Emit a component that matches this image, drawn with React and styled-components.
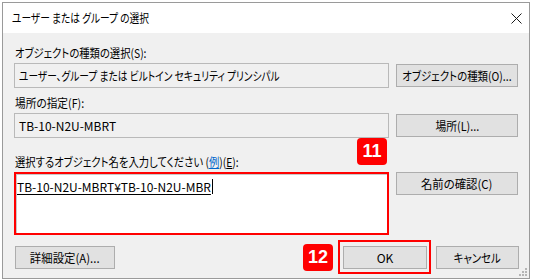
import React from 'react'
import styled, { createGlobalStyle, css } from 'styled-components'

const GlobalStyle = createGlobalStyle`
  html, body {
    margin: 0;
    padding: 0;
    background: #fff;
  }
  body {
    font-family: "Noto Sans CJK JP", "Noto Sans", sans-serif;
    font-feature-settings: "palt";
    font-size: 12px;
    color: #000;
  }
`

// Yu Gothic UI is much narrower than Noto Sans CJK, so text is condensed per use
const Text = styled.span`
  display: inline-block;
  white-space: nowrap;
  transform: scaleX(${p => p.$sx || 1});
  transform-origin: ${p => (p.$center ? 'center' : 'left')} center;
`

const CloseIcon = () => (
  <svg width="11" height="11" viewBox="0 0 11 11">
    <path d="M0.5 0.5 L10.5 10.5 M10.5 0.5 L0.5 10.5" stroke="#1a1a1a" strokeWidth="1" fill="none" />
  </svg>
)

const GripIcon = () => (
  <svg width="9" height="9" viewBox="0 0 9 9">
    <g fill="#b5b5b5">
      <rect x="6" y="0" width="2" height="2" />
      <rect x="3" y="3" width="2" height="2" />
      <rect x="6" y="3" width="2" height="2" />
      <rect x="0" y="6" width="2" height="2" />
      <rect x="3" y="6" width="2" height="2" />
      <rect x="6" y="6" width="2" height="2" />
    </g>
  </svg>
)

export default function App() {
  return (
    <>
      <GlobalStyle />
      <Window>
        <TitleBar>
          <Title><Text $sx={0.81}>ユーザー または グループ の選択</Text></Title>
          <CloseButton><CloseIcon /></CloseButton>
        </TitleBar>
        <Body>
          <Label><Text $sx={0.86}>オブジェクトの種類の選択(S):</Text></Label>
          <Row>
            <ReadOnlyField>
              <Text $sx={0.81}>ユーザー、グループ または ビルトイン セキュリティ プリンシパル</Text>
            </ReadOnlyField>
            <Button><Text $sx={0.87} $center>オブジェクトの種類(O)...</Text></Button>
          </Row>

          <Label $top={8}><Text $sx={0.89}>場所の指定(F):</Text></Label>
          <Row>
            <ReadOnlyField>TB-10-N2U-MBRT</ReadOnlyField>
            <Button><Text $sx={0.9} $center>場所(L)...</Text></Button>
          </Row>

          <Label $top={17}>
            <Text $sx={0.86}>
              選択するオブジェクト名を入力してください (<Link>例</Link>)(<u>E</u>):
            </Text>
          </Label>
          <Row $align="flex-start">
            <InputArea>
              <Badge $top={-36} $right={0}>11</Badge>
              <Resolved>TB-10-N2U-MBRT¥TB-10-N2U-MBR</Resolved>
              <Caret />
            </InputArea>
            <Button><Text $sx={0.95} $center>名前の確認(C)</Text></Button>
          </Row>

          <Footer>
            <Button $width={100}><Text $sx={0.95} $center>詳細設定(A)...</Text></Button>
            <FooterRight>
              <Highlighted>
                <Badge $top={-2} $left={-40}>12</Badge>
                <Button $width={84}>OK</Button>
              </Highlighted>
              <Button $width={83}><Text $sx={0.87} $center>キャンセル</Text></Button>
            </FooterRight>
          </Footer>
        </Body>
        <Grip><GripIcon /></Grip>
      </Window>
    </>
  )
}

const Window = styled.div`
  position: relative;
  box-sizing: border-box;
  margin: 2px 0 0 2px;
  width: 528px;
  height: 277px;
  border: 1px solid #9a9a9a;
  background: #f0f0f0;
  display: flex;
  flex-direction: column;
`

const TitleBar = styled.div`
  height: 30px;
  background: #fff;
  display: flex;
  align-items: center;
  justify-content: space-between;
  padding: 0 3px 0 9px;
`

const Title = styled.div`
  font-size: 12px;
  line-height: 14px;
  margin-top: -1px;
`

const CloseButton = styled.div`
  width: 20px;
  display: flex;
  justify-content: center;
`

const Body = styled.div`
  flex: 1;
  display: flex;
  flex-direction: column;
  padding: 13px 10px 0 11px;
`

const Label = styled.div`
  line-height: 14px;
  margin-top: ${p => p.$top || 0}px;
  margin-bottom: 3px;
  padding-left: 1px;
  white-space: nowrap;
`

const Link = styled.span`
  color: #0066cc;
  text-decoration: underline;
`

const Row = styled.div`
  display: flex;
  align-items: ${p => p.$align || 'center'};
  gap: 7px;
`

const fieldBox = css`
  box-sizing: border-box;
  width: 375px;
`

const ReadOnlyField = styled.div`
  ${fieldBox};
  height: 25px;
  border: 1px solid #b9b9b9;
  background: #f0f0f0;
  padding: 0 4px;
  display: flex;
  align-items: center;
  white-space: nowrap;
  overflow: hidden;
`

const InputArea = styled.div`
  ${fieldBox};
  position: relative;
  height: 63px;
  border: 2px solid #f00;
  background: #fff;
  box-shadow: inset 1px 1px 0 #c8c8c8;
  padding: 5px 1px 0 1px;
  display: flex;
  align-items: flex-start;
`

const Resolved = styled.span`
  line-height: 15px;
  text-decoration: underline;
  text-underline-offset: 2px;
  white-space: nowrap;
`

const Caret = styled.span`
  display: inline-block;
  width: 1px;
  height: 15px;
  background: #000;
  margin-left: 1px;
`

const Button = styled.div`
  box-sizing: border-box;
  width: ${p => p.$width || 122}px;
  height: 23px;
  border: 1px solid #adadad;
  background: #e1e1e1;
  display: flex;
  align-items: center;
  justify-content: center;
  white-space: nowrap;
  flex-shrink: 0;
`

const Footer = styled.div`
  margin-top: 11px;
  display: flex;
  justify-content: space-between;
  padding-left: 1px;
`

const FooterRight = styled.div`
  display: flex;
  gap: 9px;
`

const Highlighted = styled.div`
  position: relative;

  &::after {
    content: '';
    position: absolute;
    inset: -6px -4px -5px -5px;
    border: 2px solid #f00;
    pointer-events: none;
  }
`

const Badge = styled.div`
  position: absolute;
  top: ${p => p.$top}px;
  ${p => (p.$right !== undefined ? `right: ${p.$right}px;` : `left: ${p.$left}px;`)}
  width: 30px;
  height: 27px;
  border-radius: 4px;
  background: #f00;
  color: #fff;
  font-family: "Liberation Sans", Arial, sans-serif;
  font-weight: 700;
  font-size: 18px;
  display: flex;
  align-items: center;
  justify-content: center;
  z-index: 1;
`

const Grip = styled.div`
  position: absolute;
  right: 1px;
  bottom: 1px;
  line-height: 0;
`
